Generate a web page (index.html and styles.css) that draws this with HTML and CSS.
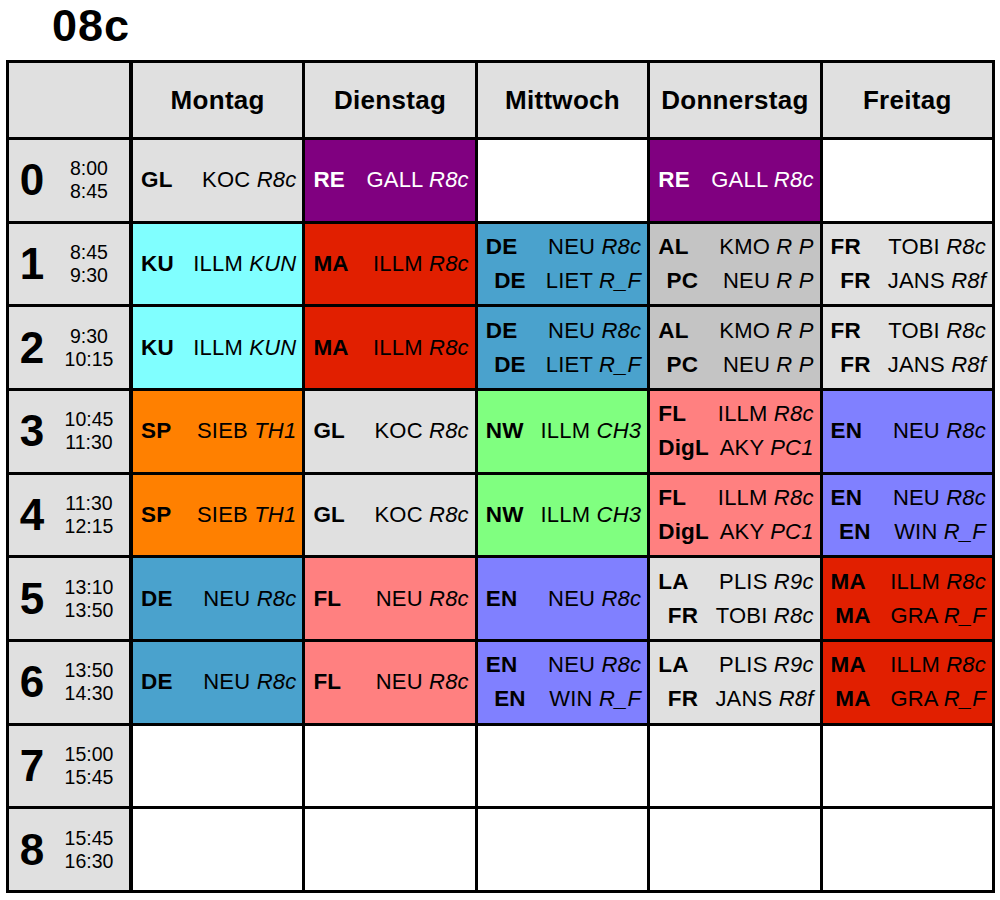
FILE: index.html
```html
<!DOCTYPE html>
<html lang="de">
<head>
<meta charset="utf-8">
<title>08c</title>
<link rel="stylesheet" href="styles.css">
</head>
<body>
<div class="title">08c</div>
<div class="tt">
  <div class="hd corner"></div>
  <div class="hd">Montag</div>
  <div class="hd">Dienstag</div>
  <div class="hd">Mittwoch</div>
  <div class="hd">Donnerstag</div>
  <div class="hd">Freitag</div>

  <div class="pc"><span class="num">0</span><span class="tm">8:00<br>8:45</span></div>
  <div class="c gray"><div class="ln"><b>GL</b><span>KOC <i>R8c</i></span></div></div>
  <div class="c purple"><div class="ln"><b>RE</b><span>GALL <i>R8c</i></span></div></div>
  <div class="c white"></div>
  <div class="c purple"><div class="ln"><b>RE</b><span>GALL <i>R8c</i></span></div></div>
  <div class="c white"></div>

  <div class="pc"><span class="num">1</span><span class="tm">8:45<br>9:30</span></div>
  <div class="c cyan"><div class="ln"><b>KU</b><span>ILLM <i>KUN</i></span></div></div>
  <div class="c red"><div class="ln"><b>MA</b><span>ILLM <i>R8c</i></span></div></div>
  <div class="c blue"><div class="ln"><b>DE</b><span>NEU <i>R8c</i></span></div><div class="ln l2"><b>DE</b><span>LIET <i>R_F</i></span></div></div>
  <div class="c dgray"><div class="ln"><b>AL</b><span>KMO <i>R P</i></span></div><div class="ln l2"><b>PC</b><span>NEU <i>R P</i></span></div></div>
  <div class="c gray"><div class="ln"><b>FR</b><span>TOBI <i>R8c</i></span></div><div class="ln l2"><b>FR</b><span>JANS <i>R8f</i></span></div></div>

  <div class="pc"><span class="num">2</span><span class="tm">9:30<br>10:15</span></div>
  <div class="c cyan"><div class="ln"><b>KU</b><span>ILLM <i>KUN</i></span></div></div>
  <div class="c red"><div class="ln"><b>MA</b><span>ILLM <i>R8c</i></span></div></div>
  <div class="c blue"><div class="ln"><b>DE</b><span>NEU <i>R8c</i></span></div><div class="ln l2"><b>DE</b><span>LIET <i>R_F</i></span></div></div>
  <div class="c dgray"><div class="ln"><b>AL</b><span>KMO <i>R P</i></span></div><div class="ln l2"><b>PC</b><span>NEU <i>R P</i></span></div></div>
  <div class="c gray"><div class="ln"><b>FR</b><span>TOBI <i>R8c</i></span></div><div class="ln l2"><b>FR</b><span>JANS <i>R8f</i></span></div></div>

  <div class="pc"><span class="num">3</span><span class="tm">10:45<br>11:30</span></div>
  <div class="c orange"><div class="ln"><b>SP</b><span>SIEB <i>TH1</i></span></div></div>
  <div class="c gray"><div class="ln"><b>GL</b><span>KOC <i>R8c</i></span></div></div>
  <div class="c green"><div class="ln"><b>NW</b><span>ILLM <i>CH3</i></span></div></div>
  <div class="c salmon"><div class="ln"><b>FL</b><span>ILLM <i>R8c</i></span></div><div class="ln l2"><b>DigL</b><span>AKY <i>PC1</i></span></div></div>
  <div class="c violet"><div class="ln"><b>EN</b><span>NEU <i>R8c</i></span></div></div>

  <div class="pc"><span class="num">4</span><span class="tm">11:30<br>12:15</span></div>
  <div class="c orange"><div class="ln"><b>SP</b><span>SIEB <i>TH1</i></span></div></div>
  <div class="c gray"><div class="ln"><b>GL</b><span>KOC <i>R8c</i></span></div></div>
  <div class="c green"><div class="ln"><b>NW</b><span>ILLM <i>CH3</i></span></div></div>
  <div class="c salmon"><div class="ln"><b>FL</b><span>ILLM <i>R8c</i></span></div><div class="ln l2"><b>DigL</b><span>AKY <i>PC1</i></span></div></div>
  <div class="c violet"><div class="ln"><b>EN</b><span>NEU <i>R8c</i></span></div><div class="ln l2"><b>EN</b><span>WIN <i>R_F</i></span></div></div>

  <div class="pc"><span class="num">5</span><span class="tm">13:10<br>13:50</span></div>
  <div class="c blue"><div class="ln"><b>DE</b><span>NEU <i>R8c</i></span></div></div>
  <div class="c salmon"><div class="ln"><b>FL</b><span>NEU <i>R8c</i></span></div></div>
  <div class="c violet"><div class="ln"><b>EN</b><span>NEU <i>R8c</i></span></div></div>
  <div class="c gray"><div class="ln"><b>LA</b><span>PLIS <i>R9c</i></span></div><div class="ln l2"><b>FR</b><span>TOBI <i>R8c</i></span></div></div>
  <div class="c red"><div class="ln"><b>MA</b><span>ILLM <i>R8c</i></span></div><div class="ln l2"><b>MA</b><span>GRA <i>R_F</i></span></div></div>

  <div class="pc"><span class="num">6</span><span class="tm">13:50<br>14:30</span></div>
  <div class="c blue"><div class="ln"><b>DE</b><span>NEU <i>R8c</i></span></div></div>
  <div class="c salmon"><div class="ln"><b>FL</b><span>NEU <i>R8c</i></span></div></div>
  <div class="c violet"><div class="ln"><b>EN</b><span>NEU <i>R8c</i></span></div><div class="ln l2"><b>EN</b><span>WIN <i>R_F</i></span></div></div>
  <div class="c gray"><div class="ln"><b>LA</b><span>PLIS <i>R9c</i></span></div><div class="ln l2"><b>FR</b><span>JANS <i>R8f</i></span></div></div>
  <div class="c red"><div class="ln"><b>MA</b><span>ILLM <i>R8c</i></span></div><div class="ln l2"><b>MA</b><span>GRA <i>R_F</i></span></div></div>

  <div class="pc"><span class="num">7</span><span class="tm">15:00<br>15:45</span></div>
  <div class="c white"></div>
  <div class="c white"></div>
  <div class="c white"></div>
  <div class="c white"></div>
  <div class="c white"></div>

  <div class="pc"><span class="num">8</span><span class="tm">15:45<br>16:30</span></div>
  <div class="c white"></div>
  <div class="c white"></div>
  <div class="c white"></div>
  <div class="c white"></div>
  <div class="c white"></div>
</div>
</body>
</html>
```
FILE: styles.css
```css
html, body {
  margin: 0;
  padding: 0;
  background: #ffffff;
}
body {
  font-family: "Liberation Sans", Arial, sans-serif;
  color: #000;
}
.title {
  height: 60px;
  padding-left: 52px;
  font-size: 45px;
  font-weight: bold;
  line-height: 52px;
  letter-spacing: 1px;
}
.tt {
  box-sizing: border-box;
  margin-left: 6px;
  width: 989px;
  height: 833px;
  display: grid;
  grid-template-columns: 121px repeat(5, 1fr);
  grid-template-rows: 74px repeat(9, 1fr);
  gap: 3px;
  padding: 3px;
  background: #000;
}
.hd {
  background: #e0e0e0;
  display: flex;
  align-items: center;
  justify-content: center;
  font-weight: bold;
  font-size: 26px;
  letter-spacing: 0.3px;
}
.corner {
  margin-right: 1px;
}
.pc {
  margin-right: 1px;
  background: #e0e0e0;
  display: flex;
  align-items: center;
}
.num {
  width: 46px;
  text-align: center;
  font-weight: bold;
  font-size: 44px;
  line-height: 44px;
}
.tm {
  width: 68px;
  text-align: center;
  font-size: 19.5px;
  line-height: 23px;
}
.c {
  display: flex;
  flex-direction: column;
  justify-content: center;
  padding: 0 6px 0 8px;
  font-size: 22px;
  min-width: 0;
}
.ln {
  display: flex;
  justify-content: space-between;
  align-items: baseline;
  line-height: 34px;
  white-space: nowrap;
  letter-spacing: 0.2px;
}
.ln b {
  font-weight: bold;
  font-size: 22.5px;
}
.ln i {
  font-style: italic;
}
.l2 b {
  display: inline-block;
  min-width: 40px;
  text-align: right;
}
.white { background: #ffffff; }
.gray { background: #e0e0e0; }
.dgray { background: #c4c4c4; }
.purple { background: #800080; color: #ffffff; }
.cyan { background: #80ffff; }
.red { background: #e11f00; }
.blue { background: #4aa2cd; }
.orange { background: #ff8000; }
.green { background: #80ff80; }
.salmon { background: #ff8080; }
.violet { background: #8080ff; }
```
